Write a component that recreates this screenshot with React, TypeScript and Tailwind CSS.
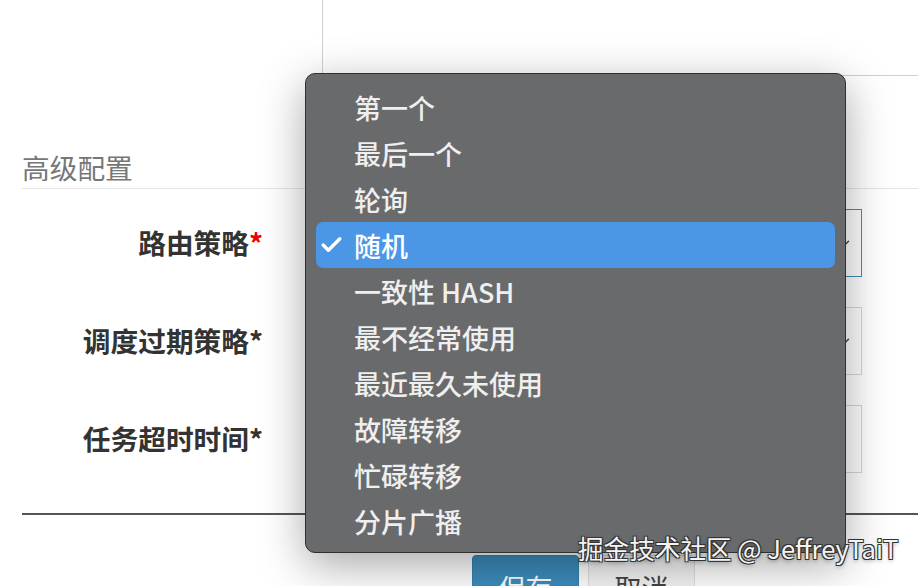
import { Check, ChevronDown } from 'lucide-react'

const options = [
  '第一个',
  '最后一个',
  '轮询',
  '随机',
  '一致性 HASH',
  '最不经常使用',
  '最近最久未使用',
  '故障转移',
  '忙碌转移',
  '分片广播',
]

const selected = '随机'

interface FieldRowProps {
  label: string
  requiredRed?: boolean
  focused?: boolean
  chevron?: boolean
}

function FieldRow({ label, requiredRed, focused, chevron }: FieldRowProps) {
  return (
    <div className="flex h-[68px] items-center">
      <label className="w-[263px] text-right text-[27.7px] font-bold leading-none text-[#333]">
        {label}
        <span className={requiredRed ? 'text-[#e00]' : 'text-[#333]'}>*</span>
      </label>
      <div
        className={`ml-[50px] flex h-[68px] w-[549px] items-center justify-end border pr-[9px] ${
          focused ? 'border-[#3c8dbc]' : 'border-[#d2d6de]'
        }`}
      >
        {chevron && <ChevronDown size={14} strokeWidth={2.5} className="text-[#444]" />}
      </div>
    </div>
  )
}

export default function App() {
  return (
    <div className="relative h-[586px] w-[918px] overflow-hidden bg-white font-['Noto_Sans_CJK_SC','Noto_Sans',sans-serif]">
      {/* textarea remnant */}
      <div className="flex h-[76px]">
        <div className="w-[322px]" />
        <div className="flex-1 border-b border-l border-[#cfcfcf]" />
      </div>

      {/* section header */}
      <div className="ml-[22px] mt-[72px] border-b border-[#e5e5e5] pb-[2px] text-[27.7px] leading-[38px] text-[#777]">
        高级配置
      </div>

      {/* form rows */}
      <div className="mt-[20px] flex flex-col gap-[30px]">
        <FieldRow label="路由策略" requiredRed focused chevron />
        <FieldRow label="调度过期策略" chevron />
        <FieldRow label="任务超时时间" />
      </div>

      {/* footer */}
      <div className="ml-[22px] mt-[40px] h-[2px] bg-[#555]" />
      <div className="mt-[40px] flex gap-[9px] pl-[472px]">
        <button className="flex h-[66px] w-[107px] items-center justify-center rounded-[4px] border border-[#367fa9] bg-[#3c8dbc] text-[27px] text-white">
          保存
        </button>
        <button className="flex h-[66px] w-[107px] items-center justify-center rounded-[4px] border border-[#ddd] bg-[#f4f4f4] text-[27px] text-[#444]">
          取消
        </button>
      </div>

      {/* open select menu */}
      <div className="absolute left-[305px] top-[73px] h-[480px] w-[541px] rounded-[10px] border border-[#2f3030] bg-[#696a6c] px-[10px] pb-[8px] pt-[10px] shadow-[0_12px_45px_rgba(0,0,0,0.35)]">
        {options.map((opt) => {
          const active = opt === selected
          return (
            <div
              key={opt}
              className={`flex h-[46px] items-center rounded-[7px] pl-[38px] text-[27px] font-medium leading-none text-[#efefef] ${
                active ? 'relative bg-[#4b97e5] text-white' : ''
              }`}
            >
              {active && (
                <Check
                  size={25}
                  strokeWidth={3.2}
                  className="absolute left-[3px] top-1/2 -translate-y-1/2 text-white"
                />
              )}
              {opt}
            </div>
          )
        })}
      </div>

      {/* watermark */}
      <div className="absolute left-[578px] top-[535px] whitespace-nowrap text-[25.6px] leading-none text-[#f4f4f4] [text-shadow:-1px_-1px_0_#333,1px_-1px_0_#333,-1px_1px_0_#333,1px_1px_0_#333,0_2px_4px_rgba(0,0,0,0.4)]">
        掘金技术社区 @ JeffreyTaiT
      </div>
    </div>
  )
}
